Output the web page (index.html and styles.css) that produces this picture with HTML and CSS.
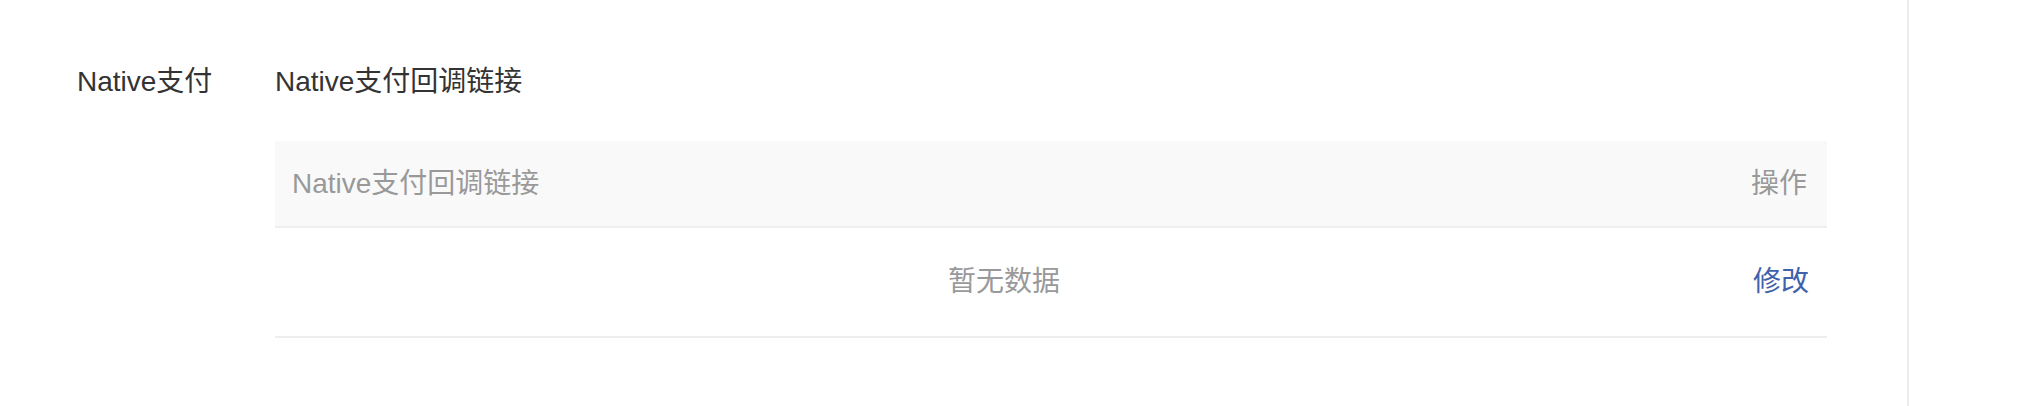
FILE: index.html
```html
<!DOCTYPE html>
<html lang="zh-CN">
<head>
<meta charset="utf-8">
<title>Native支付</title>
<link rel="stylesheet" href="styles.css">
</head>
<body>
<div class="page">
  <main class="main">
    <section class="form-row">
      <div class="form-label">Native支付</div>
      <div class="form-content">
        <div class="field-title">Native支付回调链接</div>
        <table class="data-table">
          <thead>
            <tr>
              <th class="col-main">Native支付回调链接</th>
              <th class="col-op">操作</th>
            </tr>
          </thead>
          <tbody>
            <tr>
              <td class="empty">暂无数据</td>
              <td class="col-op"><a class="link" href="#">修改</a></td>
            </tr>
          </tbody>
        </table>
      </div>
    </section>
  </main>
  <aside class="side"></aside>
</div>
</body>
</html>
```

FILE: styles.css
```css
* { box-sizing: border-box; }
html, body {
  margin: 0;
  padding: 0;
  background: #fff;
  font-family: "Liberation Sans", "Noto Sans CJK SC", sans-serif;
  font-size: 28px;
  color: #333;
}
.page {
  display: flex;
  height: 406px;
}
.main {
  width: 1909px;
  border-right: 2px solid #ececec;
  padding: 62px 0 0 77px;
}
.side { flex: 1; }
.form-row {
  display: flex;
}
.form-label {
  width: 198px;
  line-height: 40px;
  color: #333;
}
.form-content {
  width: 1552px;
}
.field-title {
  line-height: 40px;
  color: #333;
  margin-bottom: 39px;
}
.data-table {
  width: 100%;
  border-collapse: collapse;
  table-layout: fixed;
}
.data-table th {
  background: #f9f9f9;
  color: #999;
  font-weight: normal;
  height: 86px;
  line-height: 40px;
  border-bottom: 2px solid #eeeeee;
  padding: 0 21px 0 17px;
  text-align: left;
}
.data-table th.col-op {
  width: 94px;
  text-align: right;
  padding: 0 20px 0 0;
}
.data-table td {
  height: 110px;
  line-height: 40px;
  border-bottom: 2px solid #eeeeee;
  padding: 0;
  vertical-align: middle;
}
.data-table td.col-op {
  text-align: right;
  padding: 0 18px 0 0;
}
.data-table td.empty {
  text-align: center;
  color: #999;
}
.link {
  color: #4062ab;
  text-decoration: none;
}
```
